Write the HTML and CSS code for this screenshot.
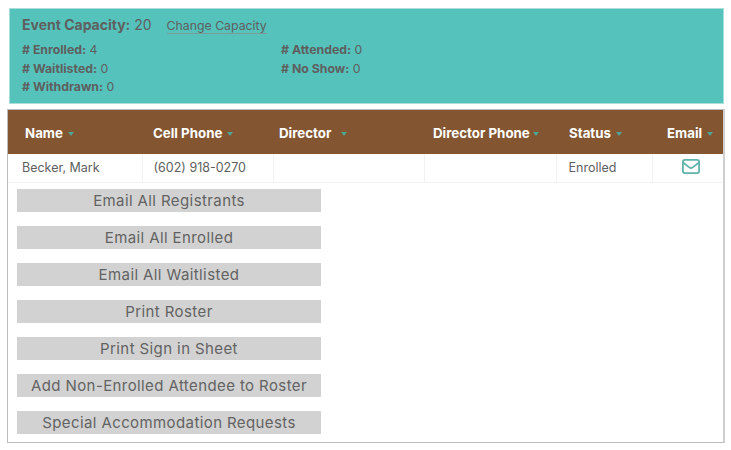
FILE: index.html
```html
<!DOCTYPE html>
<html lang="en">
<head>
    <meta charset="UTF-8">
    <title>Event Roster</title>
    <link rel="stylesheet" href="styles.css">
</head>
<body>
    <div class="summary">
        <p class="capacity"><b>Event Capacity:</b> 20 <a class="change-link" href="#">Change Capacity</a></p>
        <div class="counts">
            <div class="counts-col">
                <p><b># Enrolled:</b> 4</p>
                <p><b># Waitlisted:</b> 0</p>
                <p><b># Withdrawn:</b> 0</p>
            </div>
            <div class="counts-col">
                <p><b># Attended:</b> 0</p>
                <p><b># No Show:</b> 0</p>
            </div>
        </div>
    </div>

    <div class="roster">
        <table class="roster-table">
            <thead>
                <tr>
                    <th class="col-name">Name<span class="sort"></span></th>
                    <th class="col-cell">Cell Phone<span class="sort"></span></th>
                    <th class="col-director">Director<span class="sort wide"></span></th>
                    <th class="col-phone">Director Phone<span class="sort tight"></span></th>
                    <th class="col-status">Status<span class="sort"></span></th>
                    <th class="col-email">Email<span class="sort"></span></th>
                </tr>
            </thead>
            <tbody>
                <tr>
                    <td class="first">Becker, Mark</td>
                    <td class="phone-cell">(602) 918-0270</td>
                    <td></td>
                    <td></td>
                    <td>Enrolled</td>
                    <td class="mail-cell">
                        <svg class="mail-icon" width="18" height="15" viewBox="0 0 18 15" fill="none">
                            <rect x="0.9" y="0.9" width="16.2" height="13.2" rx="2" stroke="#5fb3ab" stroke-width="1.8"/>
                            <path d="M1 3.5 L7.6 8.6 Q9 9.6 10.4 8.6 L17 3.5" stroke="#5fb3ab" stroke-width="1.8"/>
                        </svg>
                    </td>
                </tr>
            </tbody>
        </table>

        <div class="actions">
            <button class="action-btn">Email All Registrants</button>
            <button class="action-btn">Email All Enrolled</button>
            <button class="action-btn">Email All Waitlisted</button>
            <button class="action-btn">Print Roster</button>
            <button class="action-btn">Print Sign in Sheet</button>
            <button class="action-btn">Add Non-Enrolled Attendee to Roster</button>
            <button class="action-btn">Special Accommodation Requests</button>
        </div>
    </div>
</body>
</html>
```

FILE: styles.css
```css
body {
    margin: 0;
    padding: 8px 0 0 7px;
    font-family: "Inter", "Liberation Sans", sans-serif;
    color: #5f5f5f;
    background: #fff;
}
p {
    margin: 0;
}
.summary {
    margin-left: 2px;
    width: 715px;
    height: 96px;
    box-sizing: border-box;
    padding: 7px 12px 0 12px;
    background: #55c2bc;
    border: 1px solid #a9dfdb;
}
.capacity {
    font-size: 14px;
    line-height: 18px;
}
.change-link {
    margin-left: 11px;
    font-size: 12.3px;
    color: #5f5f5f;
    text-decoration: none;
    border-bottom: 1px solid #7d9a98;
}
.counts {
    display: flex;
    margin-top: 6px;
    font-size: 12.3px;
    line-height: 18.5px;
}
.counts-col {
    width: 259px;
}
.roster {
    margin-top: 5px;
    width: 718px;
    height: 334px;
    box-sizing: border-box;
    border: 1px solid #bdbdbd;
    border-right-width: 2px;
    border-right-color: #cfcfcf;
}
.roster-table {
    width: 100%;
    table-layout: fixed;
    border-collapse: collapse;
}
.roster-table th {
    box-sizing: border-box;
    height: 44px;
    padding: 1px 0 0 0;
    background: #835531;
    color: #fff;
    font-size: 13.3px;
    font-weight: 700;
    text-align: left;
    white-space: nowrap;
}
.roster-table td {
    box-sizing: border-box;
    height: 28px;
    padding: 0 0 0 12px;
    font-size: 12.5px;
    border-right: 1px solid #f2f2f2;
    border-bottom: 1px solid #f2f2f2;
}
.roster-table td.first {
    padding-left: 14px;
}
.roster-table td.phone-cell {
    padding-left: 11px;
}
.roster-table td.mail-cell {
    padding: 0 0 2px 29px;
    border-right: none;
}
.mail-icon {
    display: block;
}
.roster-table th.col-name { width: 134px; padding-left: 17px; }
.roster-table th.col-cell { width: 131px; padding-left: 11px; }
.roster-table th.col-director { width: 151px; padding-left: 6px; }
.roster-table th.col-phone { width: 132px; padding-left: 9px; }
.roster-table th.col-status { width: 96px; padding-left: 13px; }
.roster-table th.col-email { padding-left: 15px; }
.sort {
    display: inline-block;
    margin-left: 5px;
    vertical-align: middle;
    border-left: 3px solid transparent;
    border-right: 3px solid transparent;
    border-top: 4px solid #4fa597;
}
.sort.wide {
    margin-left: 10px;
}
.sort.tight {
    margin-left: 3px;
}
.actions {
    display: flex;
    flex-direction: column;
    align-items: flex-start;
    gap: 14px;
    padding: 6px 0 0 9px;
}
.action-btn {
    width: 304px;
    height: 23px;
    padding: 0;
    border: none;
    background: #d2d2d2;
    color: #636363;
    font-family: inherit;
    font-size: 15px;
    letter-spacing: 0.4px;
    text-align: center;
}
```
